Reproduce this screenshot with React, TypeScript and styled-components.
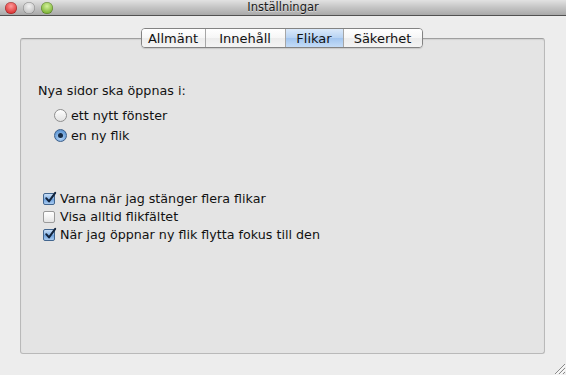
import React from "react";
import styled, { createGlobalStyle } from "styled-components";

const Global = createGlobalStyle`
  html, body { margin: 0; padding: 0; background: #ededed; }
  body { font-family: "DejaVu Sans", "Liberation Sans", sans-serif; }
`;

const Window = styled.div`
  width: 566px;
  height: 375px;
  background: #ededed;
  display: flex;
  flex-direction: column;
  position: relative;
  overflow: hidden;
`;

const TitleBar = styled.div`
  height: 15px;
  border-bottom: 1px solid #515151;
  background: linear-gradient(#e2e2e2, #c4c4c4 50%, #a9a9a9);
  display: flex;
  align-items: center;
  position: relative;
`;

const Lights = styled.div`
  display: flex;
  gap: 6px;
  padding-left: 5px;
  align-items: center;
`;

const Light = styled.div<{ $c: string; $d: string }>`
  width: 12px;
  height: 12px;
  border-radius: 50%;
  background: radial-gradient(circle at 50% 35%, ${p => p.$c} 0%, ${p => p.$d} 85%);
  box-shadow: inset 0 0 0 0.5px rgba(0,0,0,0.35);
`;

const Title = styled.div`
  position: absolute;
  left: 0;
  right: 0;
  top: 0;
  text-align: center;
  font-size: 11.5px;
  line-height: 15px;
  color: #1a1a1a;
  text-shadow: 0 1px 0 rgba(255,255,255,0.5);
`;

const Body = styled.div`
  flex: 1;
  display: flex;
  flex-direction: column;
  padding: 12px 21px 0 20px;
`;

const TabBar = styled.div`
  align-self: center;
  margin-left: -2px;
  display: flex;
  height: 20px;
  box-sizing: border-box;
  border: 1px solid #838383;
  border-radius: 4px;
  overflow: hidden;
  position: relative;
  z-index: 1;
  box-shadow: 0 1px 1px rgba(0,0,0,0.12);
`;

const Tab = styled.div<{ $active?: boolean; $w: number }>`
  width: ${p => p.$w}px;
  box-sizing: border-box;
  display: flex;
  align-items: center;
  justify-content: center;
  font-size: 13px;
  color: #111;
  border-left: 1px solid #a6a6a6;
  &:first-child { border-left: none; }
  background: ${p =>
    p.$active
      ? "linear-gradient(#dbe9fa, #b7d3f3 50%, #a2c5ef 51%, #c4dcf7)"
      : "linear-gradient(#ffffff, #f6f6f6 50%, #ececec 51%, #f4f4f4)"};
`;

const Box = styled.div`
  margin-top: -10px;
  height: 316px;
  box-sizing: border-box;
  border: 1px solid #b9b9b9;
  border-top-color: #9f9f9f;
  border-radius: 3px;
  background: #e4e4e4;
  padding: 44px 0 0 17px;
  display: flex;
  flex-direction: column;
  box-shadow: inset 0 1px 1px rgba(0,0,0,0.08);
`;

const Label = styled.div`
  font-size: 12.7px;
  color: #111;
  line-height: 15px;
`;

const RadioGroup = styled.div`
  display: flex;
  flex-direction: column;
  gap: 5px;
  margin: 10px 0 0 16px;
`;

const Row = styled.div`
  display: flex;
  align-items: center;
  gap: 4px;
  font-size: 12.7px;
  color: #111;
  line-height: 15px;
`;

const Radio = styled.div<{ $on?: boolean }>`
  width: 13px;
  height: 13px;
  border-radius: 50%;
  box-sizing: border-box;
  border: 1px solid ${p => (p.$on ? "#3c5f8a" : "#8e8e8e")};
  background: ${p =>
    p.$on
      ? "radial-gradient(circle at 50% 70%, #b9d6f5 0%, #6ea3dc 60%, #4f86c8 100%)"
      : "linear-gradient(#ffffff, #f0f0f0 50%, #e2e2e2)"};
  display: flex;
  align-items: center;
  justify-content: center;
  &::after {
    content: "";
    display: ${p => (p.$on ? "block" : "none")};
    width: 5px;
    height: 5px;
    border-radius: 50%;
    background: #152a44;
  }
`;

const RadioRow = styled(Row)`
  height: 15px;
  & + & { margin-top: 0; }
`;

const CheckGroup = styled.div`
  display: flex;
  flex-direction: column;
  gap: 3px;
  margin: 48px 0 0 5px;
`;

const CheckBox = styled.div<{ $on?: boolean }>`
  width: 12px;
  height: 12px;
  box-sizing: border-box;
  border: 1px solid ${p => (p.$on ? "#42668f" : "#9a9a9a")};
  border-radius: 2px;
  background: ${p =>
    p.$on
      ? "linear-gradient(#c8def6, #86b3e6 50%, #6b9fdc 51%, #a9cbf0)"
      : "linear-gradient(#ffffff, #f3f3f3 50%, #e4e4e4)"};
  position: relative;
  margin-right: 1px;
  svg { position: absolute; left: 0; top: -3px; }
`;

const Grip = styled.svg`
  position: absolute;
  right: 0;
  bottom: 0;
`;

function Check({ on }: { on?: boolean }) {
  return (
    <CheckBox $on={on}>
      {on && (
        <svg width="13" height="13" viewBox="0 0 13 13">
          <path d="M2.2 7.2 L5 10.4 L11.2 1.8" fill="none" stroke="#12243d" strokeWidth="2" strokeLinecap="round" strokeLinejoin="round" />
        </svg>
      )}
    </CheckBox>
  );
}

export default function App() {
  return (
    <>
      <Global />
      <Window>
        <TitleBar>
          <Lights>
            <Light $c="#ff9a9a" $d="#d41f1f" />
            <Light $c="#f2f2f2" $d="#b9b9b9" />
            <Light $c="#d4f29a" $d="#6aa622" />
          </Lights>
          <Title>Inställningar</Title>
        </TitleBar>
        <Body>
          <TabBar>
            <Tab $w={63}>Allmänt</Tab>
            <Tab $w={80}>Innehåll</Tab>
            <Tab $w={58} $active>Flikar</Tab>
            <Tab $w={79}>Säkerhet</Tab>
          </TabBar>
          <Box>
            <Label>Nya sidor ska öppnas i:</Label>
            <RadioGroup>
              <RadioRow><Radio />ett nytt fönster</RadioRow>
              <RadioRow><Radio $on />en ny flik</RadioRow>
            </RadioGroup>
            <CheckGroup>
              <Row><Check on />Varna när jag stänger flera flikar</Row>
              <Row><Check />Visa alltid flikfältet</Row>
              <Row><Check on />När jag öppnar ny flik flytta fokus till den</Row>
            </CheckGroup>
          </Box>
        </Body>
        <Grip width="14" height="14" viewBox="0 0 14 14">
          <path d="M13 3 L3 13 M13 7 L7 13 M13 11 L11 13" stroke="#8a8a8a" strokeWidth="1" />
          <path d="M13.8 3.8 L3.8 13.8 M13.8 7.8 L7.8 13.8" stroke="#ffffff" strokeWidth="1" />
        </Grip>
      </Window>
    </>
  );
}
